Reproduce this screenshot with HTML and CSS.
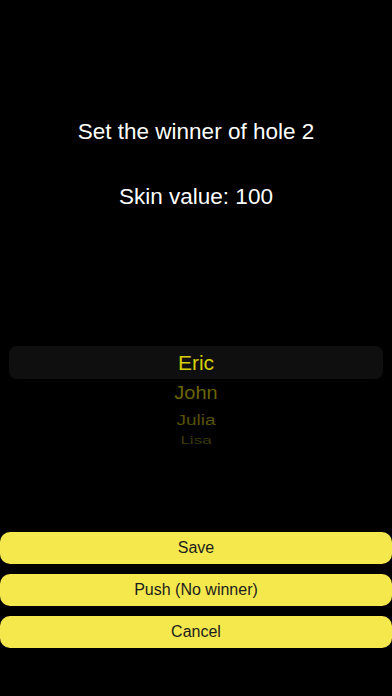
FILE: index.html
```html
<!DOCTYPE html>
<html>
<head>
<meta charset="utf-8">
<link rel="stylesheet" href="styles.css">
</head>
<body>
<div class="screen">
  <div class="title">Set the winner of hole 2</div>
  <div class="skin">Skin value: 100</div>
  <div class="picker">
    <div class="row selected">Eric</div>
    <div class="row r1"><span>John</span></div>
    <div class="row r2"><span>Julia</span></div>
    <div class="row r3"><span>Lisa</span></div>
  </div>
  <div class="buttons">
    <button class="btn">Save</button>
    <button class="btn">Push (No winner)</button>
    <button class="btn">Cancel</button>
  </div>
</div>
</body>
</html>
```

FILE: styles.css
```css
html, body {
  margin: 0;
  padding: 0;
  background: #000;
}
.screen {
  width: 392px;
  height: 696px;
  display: flex;
  flex-direction: column;
  font-family: "Liberation Sans", Arial, sans-serif;
  color: #fff;
}
.title {
  margin-top: 119px;
  height: 26px;
  line-height: 26px;
  font-size: 22.5px;
  text-align: center;
}
.skin {
  margin-top: 39px;
  height: 26px;
  line-height: 26px;
  font-size: 22.5px;
  text-align: center;
}
.picker {
  margin: 136px 9px 0 9px;
  display: flex;
  flex-direction: column;
  align-items: stretch;
}
.row {
  text-align: center;
}
.row span {
  display: inline-block;
}
.selected {
  height: 33px;
  line-height: 33px;
  background: #0f0f0f;
  border-radius: 8px;
  font-size: 21px;
  color: #d6cf00;
}
.r1 {
  height: 28px;
  line-height: 28px;
  font-size: 20px;
  color: #6a6400;
}
.r1 span { transform: scaleY(0.92); }
.r2 {
  height: 25px;
  line-height: 25px;
  font-size: 19px;
  color: #575200;
}
.r2 span { transform: scaleY(0.8); }
.r3 {
  height: 17px;
  line-height: 17px;
  font-size: 17px;
  color: #3c3900;
}
.r3 span { transform: scaleY(0.62); }
.buttons {
  margin-top: auto;
  margin-bottom: 48px;
  display: flex;
  flex-direction: column;
  gap: 10px;
}
.btn {
  height: 32px;
  border: none;
  border-radius: 10px;
  background: #f5e84c;
  color: #1c1c1c;
  font-family: "Liberation Sans", Arial, sans-serif;
  font-size: 16px;
  padding: 0;
  width: 392px;
}
```
